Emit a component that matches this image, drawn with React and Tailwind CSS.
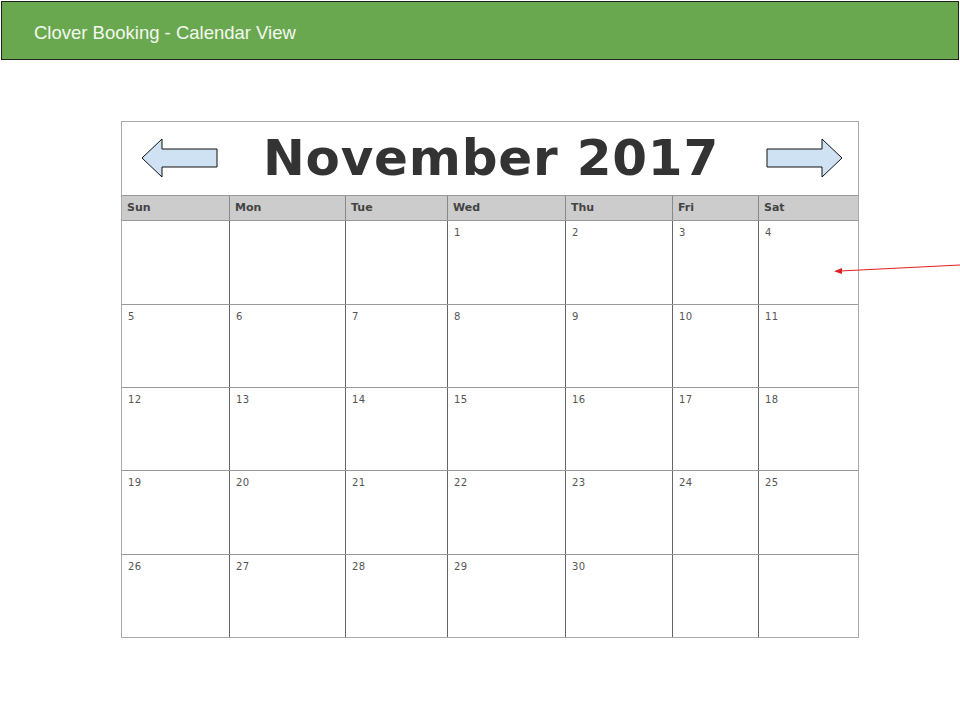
import React from "react";

const cols = ["107px", "116px", "102px", "118px", "107px", "86px", "100px"];
const dayNames = ["Sun", "Mon", "Tue", "Wed", "Thu", "Fri", "Sat"];
const rowHeights = ["h-[83px]", "h-[82px]", "h-[82px]", "h-[83px]", "h-[82px]"];

// November 2017 starts on a Wednesday
const weeks = [];
let day = 1 - 3;
for (let w = 0; w < 5; w++) {
    const week = [];
    for (let d = 0; d < 7; d++) {
        week.push(day >= 1 && day <= 30 ? day : null);
        day++;
    }
    weeks.push(week);
}

function LeftArrow() {
    return (
        <svg width="78" height="42" viewBox="0 0 78 42">
            <polygon points="1,20 21,1 21,11 76,11 76,29 21,29 21,39" fill="#cfe2f3" stroke="#111" strokeWidth="1" />
        </svg>
    );
}

function RightArrow() {
    return (
        <svg width="78" height="42" viewBox="0 0 78 42">
            <polygon points="76,20 56,1 56,11 1,11 1,29 56,29 56,39" fill="#cfe2f3" stroke="#111" strokeWidth="1" />
        </svg>
    );
}

export default function App() {
    return (
        <div className="relative w-[960px] h-[720px] bg-white overflow-hidden">
            <div className="mx-[1px] mt-[1px] h-[59px] bg-[#6aa84f] border border-[#222] flex items-center pl-[32px] pt-[4px]">
                <span className="text-[18.5px] text-[#f3f8ef]" style={{ fontFamily: "'Liberation Sans', Arial, sans-serif" }}>
                    Clover Booking - Calendar View
                </span>
            </div>

            <div className="ml-[121px] mt-[61px] w-[738px] border border-[#aaa]" style={{ fontFamily: "'DejaVu Sans', sans-serif" }}>
                <div className="h-[73px] flex items-center justify-between pl-[19px] pr-[14px]">
                    <LeftArrow />
                    <h1 className="text-[50px] font-bold text-[#333] leading-none tracking-[0.8px] pb-[2px] mr-[3px]">November 2017</h1>
                    <RightArrow />
                </div>

                <div className="grid border-t border-[#999] bg-[#cccccc]" style={{ gridTemplateColumns: cols.join(" ") }}>
                    {dayNames.map((n, i) => (
                        <div key={n} className={`h-[24px] flex items-center pl-[5px] text-[11px] font-bold text-[#444] ${i > 0 ? "border-l border-[#888]" : ""}`}>
                            {n}
                        </div>
                    ))}
                </div>

                {weeks.map((week, w) => (
                    <div key={w} className="grid border-t border-[#999]" style={{ gridTemplateColumns: cols.join(" ") }}>
                        {week.map((d, i) => (
                            <div key={i} className={`${rowHeights[w]} pl-[6px] pt-[4px] text-[10px] tracking-[0.3px] text-[#555] ${i > 0 ? "border-l border-[#666]" : ""}`}>
                                {d}
                            </div>
                        ))}
                    </div>
                ))}
            </div>

            <svg className="absolute left-0 top-0 pointer-events-none" width="960" height="720">
                <line x1="960" y1="265" x2="840" y2="271" stroke="#e02020" strokeWidth="1" />
                <polygon points="834,271.3 842,268 842,274" fill="#e02020" />
            </svg>
        </div>
    );
}
